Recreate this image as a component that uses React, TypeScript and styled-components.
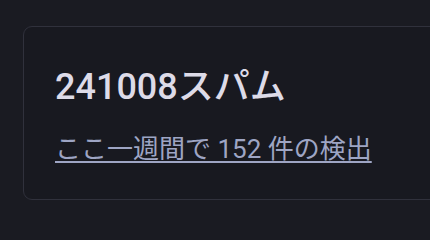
import styled, { createGlobalStyle } from 'styled-components';

const GlobalStyle = createGlobalStyle`
  html, body {
    margin: 0;
    padding: 0;
    background: #1a1b22;
  }
  body {
    font-family: Roboto, "Noto Sans CJK JP", sans-serif;
  }
`;

const Page = styled.div`
  padding: 26px 0 0 23px;
  overflow: hidden;
  height: 238px;
  box-sizing: border-box;
`;

const Card = styled.section`
  width: 460px;
  height: 174px;
  box-sizing: border-box;
  border: 1.5px solid #30313c;
  border-radius: 9px;
  background: #181920;
  padding: 38px 31px 0;
  display: flex;
  flex-direction: column;
  gap: 23px;
`;

const Title = styled.h2`
  margin: 0;
  font-size: 36px;
  line-height: 44px;
  font-weight: 500;
  color: #dddbe8;
`;

const Detections = styled.a`
  font-size: 26px;
  line-height: 34px;
  color: #9ea5c4;
  text-decoration: underline;
  text-decoration-thickness: 2px;
  text-underline-offset: 3px;
  cursor: pointer;
  align-self: flex-start;
`;

export default function App() {
  return (
    <>
      <GlobalStyle />
      <Page>
        <Card>
          <Title>241008スパム</Title>
          <Detections>ここ一週間で 152 件の検出</Detections>
        </Card>
      </Page>
    </>
  );
}
